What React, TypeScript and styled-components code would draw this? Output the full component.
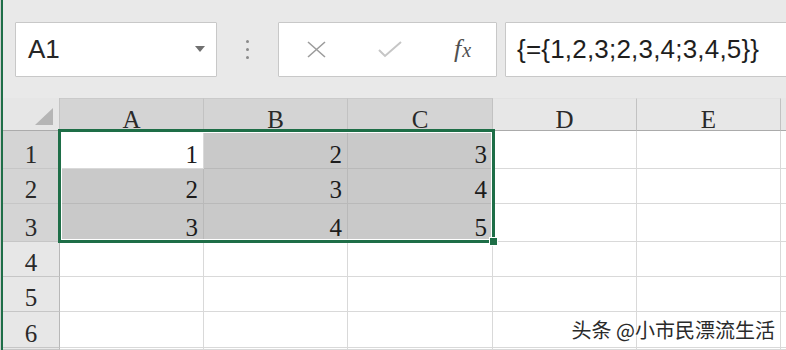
import styled, { createGlobalStyle } from 'styled-components';

const GlobalStyle = createGlobalStyle`
  html, body {
    margin: 0;
    padding: 0;
    background: #fff;
  }
  body {
    width: 786px;
    height: 350px;
    overflow: hidden;
  }
`;

const Window = styled.div`
  position: relative;
  width: 786px;
  height: 350px;
  box-sizing: border-box;
  border-left: 1px solid #cfcfcf;
  overflow: hidden;
  font-family: 'Liberation Sans', Arial, sans-serif;
`;

const Frame = styled.div`
  height: 100%;
  display: flex;
  flex-direction: column;
  border-left: 2px solid #1f6e48;
`;

const Toolbar = styled.div`
  height: 98px;
  flex: none;
  display: flex;
  align-items: center;
  padding-left: 12px;
  background: #e9e9e9;
`;

const Box = styled.div`
  height: 55px;
  box-sizing: border-box;
  background: #fff;
  border: 1px solid #c8c8c8;
  border-radius: 1px;
  display: flex;
  align-items: center;
`;

const NameBox = styled(Box)`
  width: 202px;
  justify-content: space-between;
  padding: 0 11px 0 12px;
  font-size: 26px;
  color: #262626;
`;

const Caret = styled.span`
  width: 0;
  height: 0;
  border-left: 5px solid transparent;
  border-right: 5px solid transparent;
  border-top: 6px solid #707070;
`;

const Grip = styled.div`
  width: 61px;
  display: flex;
  flex-direction: column;
  align-items: center;
  gap: 5px;

  span {
    width: 3px;
    height: 3px;
    border-radius: 50%;
    background: #8a8a8a;
  }
`;

const ButtonBox = styled(Box)`
  width: 219px;
  display: grid;
  grid-template-columns: 74px 74px 71px;
  justify-items: center;
`;

const Fx = styled.span`
  font-family: 'Liberation Serif', 'DejaVu Serif', serif;
  font-style: italic;
  font-size: 26px;
  color: #505050;

  small {
    font-size: 20px;
    margin-left: 1px;
  }
`;

const FormulaBox = styled(Box)`
  flex: 1;
  margin: 0 -12px 0 8px;
  padding-left: 11px;
  font-size: 26px;
  letter-spacing: 0.2px;
  color: #1e1e1e;
`;

const Sheet = styled.div`
  position: relative;
  flex: 1;
  display: grid;
  grid-template-columns: 57px 144px 144px 145px 144px 144px 1fr;
  grid-template-rows: 33px 38px 35px 38px 35px 35px 36px 1fr;
  font-family: 'Liberation Serif', 'Times New Roman', serif;
  font-size: 25px;
  color: #1c1c1c;
`;

const Corner = styled.div`
  background: #e6e6e6;
  border-right: 1px solid #c4c4c4;
  border-bottom: 1px solid #ababab;
  box-sizing: border-box;
  display: flex;
  align-items: flex-end;
  justify-content: flex-end;
  padding: 0 6px 5px 0;
`;

const ColHeader = styled.div<{ $active?: boolean }>`
  box-sizing: border-box;
  background: ${(p) => (p.$active ? '#d4d4d4' : '#e7e7e7')};
  border-top: 1px solid ${(p) => (p.$active ? '#cacaca' : '#e2e2e2')};
  border-right: 1px solid #c2c2c2;
  border-bottom: 1px solid #ababab;
  display: flex;
  align-items: flex-end;
  justify-content: center;
  line-height: 21px;
  color: #2a2a2a;
`;

const RowHeader = styled.div<{ $active?: boolean }>`
  box-sizing: border-box;
  background: ${(p) => (p.$active ? '#d4d4d4' : '#e7e7e7')};
  border-right: 1px solid #b8b8b8;
  border-bottom: 1px solid #c6c6c6;
  display: flex;
  align-items: flex-end;
  justify-content: center;
  line-height: 27px;
  color: #2a2a2a;
`;

const Cell = styled.div<{ $shaded?: boolean }>`
  box-sizing: border-box;
  background: ${(p) => (p.$shaded ? '#c9c9c9' : '#fff')};
  border-right: 1px solid ${(p) => (p.$shaded ? '#b9b9b9' : '#d9d9d9')};
  border-bottom: 1px solid ${(p) => (p.$shaded ? '#b9b9b9' : '#d9d9d9')};
  display: flex;
  align-items: flex-end;
  justify-content: flex-end;
  padding-right: 5px;
  line-height: 27px;
`;

const Filler = styled.div<{ $header?: boolean }>`
  box-sizing: border-box;
  background: ${(p) => (p.$header ? '#e7e7e7' : '#fff')};
  border-bottom: 1px solid ${(p) => (p.$header ? '#ababab' : '#d9d9d9')};
`;

const Selection = styled.div`
  position: absolute;
  left: 55px;
  top: 31px;
  width: 437px;
  height: 114px;
  box-sizing: border-box;
  border: 3px solid #1e6e47;
  box-shadow: inset 0 0 0 1px #fff;
  pointer-events: none;
`;

const Handle = styled.span`
  position: absolute;
  right: -6px;
  bottom: -6px;
  width: 7px;
  height: 7px;
  background: #1e6e47;
  border: 1px solid #fff;
`;

const Watermark = styled.div`
  position: absolute;
  right: 11px;
  bottom: 10px;
  font-family: 'Noto Sans CJK SC', 'Noto Sans', sans-serif;
  font-size: 20px;
  line-height: 1;
  color: #2a2a2a;
  text-shadow: 0 0 2px #fff, 0 0 2px #fff;
`;

const columns = ['A', 'B', 'C', 'D', 'E'];
const values: (number | null)[][] = [
  [1, 2, 3],
  [2, 3, 4],
  [3, 4, 5],
  [],
  [],
  [],
];

export default function App() {
  return (
    <>
      <GlobalStyle />
      <Window>
        <Frame>
          <Toolbar>
            <NameBox>
              A1
              <Caret />
            </NameBox>
            <Grip>
              <span />
              <span />
              <span />
            </Grip>
            <ButtonBox>
              <svg width="21" height="17" viewBox="0 0 21 17">
                <path d="M2 1 L19 16 M19 1 L2 16" stroke="#9c9c9c" strokeWidth="1.6" fill="none" />
              </svg>
              <svg width="24" height="17" viewBox="0 0 24 17">
                <path d="M1 9 L7 15 L23 1" stroke="#c6c6c6" strokeWidth="2" fill="none" />
              </svg>
              <Fx>
                f<small>x</small>
              </Fx>
            </ButtonBox>
            <FormulaBox>{'{={1,2,3;2,3,4;3,4,5}}'}</FormulaBox>
          </Toolbar>

          <Sheet>
            <Corner>
              <svg width="18" height="17" viewBox="0 0 18 17">
                <path d="M18 0 L18 17 L0 17 Z" fill="#b5b5b5" />
              </svg>
            </Corner>
            {columns.map((c, i) => (
              <ColHeader key={c} $active={i < 3}>
                {c}
              </ColHeader>
            ))}
            <Filler $header />

            {values.map((row, r) => (
              <>
                <RowHeader key={`h${r}`} $active={r < 3}>
                  {r + 1}
                </RowHeader>
                {columns.map((c, ci) => {
                  const v = row[ci];
                  const inRange = r < 3 && ci < 3;
                  return (
                    <Cell key={`${c}${r}`} $shaded={inRange && !(r === 0 && ci === 0)}>
                      {v ?? ''}
                    </Cell>
                  );
                })}
                <Filler key={`f${r}`} />
              </>
            ))}
            <RowHeader />
            {columns.map((c) => (
              <Cell key={`${c}last`} />
            ))}
            <Filler />

            <Selection>
              <Handle />
            </Selection>
          </Sheet>

          <Watermark>头条 @小市民漂流生活</Watermark>
        </Frame>
      </Window>
    </>
  );
}
